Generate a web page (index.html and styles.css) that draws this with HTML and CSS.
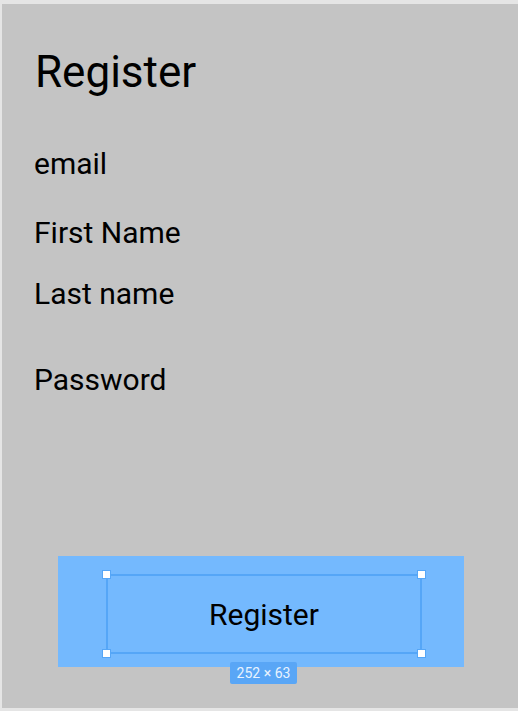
FILE: index.html
```html
<!DOCTYPE html>
<html lang="en">
<head>
<meta charset="utf-8">
<title>Register</title>
<link rel="stylesheet" href="styles.css">
</head>
<body>
<div class="panel">
  <h1 class="title">Register</h1>
  <div class="field field-email">email</div>
  <div class="field field-first">First Name</div>
  <div class="field field-last">Last name</div>
  <div class="field field-pass">Password</div>
  <div class="button-wrap">
    <div class="button">
      <span class="button-text">Register</span>
      <div class="selection">
        <span class="handle h-tl"></span>
        <span class="handle h-tr"></span>
        <span class="handle h-bl"></span>
        <span class="handle h-br"></span>
      </div>
      <div class="size-badge">252 × 63</div>
    </div>
  </div>
</div>
</body>
</html>
```
FILE: styles.css
```css
html, body {
  margin: 0;
  padding: 0;
  background: #e5e5e5;
  width: 518px;
  height: 711px;
  overflow: hidden;
}
body {
  font-family: Roboto, "Liberation Sans", sans-serif;
  color: #000;
}
.panel {
  box-sizing: border-box;
  margin: 4px 0 0 2px;
  width: 516px;
  height: 704px;
  background: #c4c4c4;
  padding: 46px 0 0 32px;
  display: flex;
  flex-direction: column;
}
.title {
  margin: 0 0 0 1px;
  font-size: 44px;
  line-height: 44px;
  font-weight: 400;
}
.field {
  font-size: 30px;
  line-height: 30px;
}
.field-email { margin-top: 55px; }
.field-first { margin-top: 39px; }
.field-last { margin-top: 31px; }
.field-pass { margin-top: 56px; }
.button-wrap {
  margin-top: 161px;
  margin-left: 24px;
}
.button {
  position: relative;
  box-sizing: border-box;
  width: 406px;
  height: 111px;
  background: #74b9fe;
  padding-top: 44px;
}
.button-text {
  display: block;
  width: 316px;
  font-size: 30px;
  line-height: 30px;
  text-align: center;
  margin-left: 48px;
}
.selection {
  position: absolute;
  left: 48px;
  top: 18px;
  width: 316px;
  height: 80px;
  box-sizing: border-box;
  border: 2px solid #55a6f7;
}
.handle {
  position: absolute;
  width: 7px;
  height: 7px;
  background: #fff;
  border: 1px solid #55a6f7;
}
.h-tl { left: -6px; top: -6px; }
.h-tr { right: -6px; top: -6px; }
.h-bl { left: -6px; bottom: -6px; }
.h-br { right: -6px; bottom: -6px; }
.size-badge {
  position: absolute;
  left: 172px;
  top: 106px;
  width: 67px;
  height: 22px;
  background: #59a6f6;
  border-radius: 2px;
  color: #e8f3ff;
  font-size: 14px;
  line-height: 22px;
  text-align: center;
}
```
